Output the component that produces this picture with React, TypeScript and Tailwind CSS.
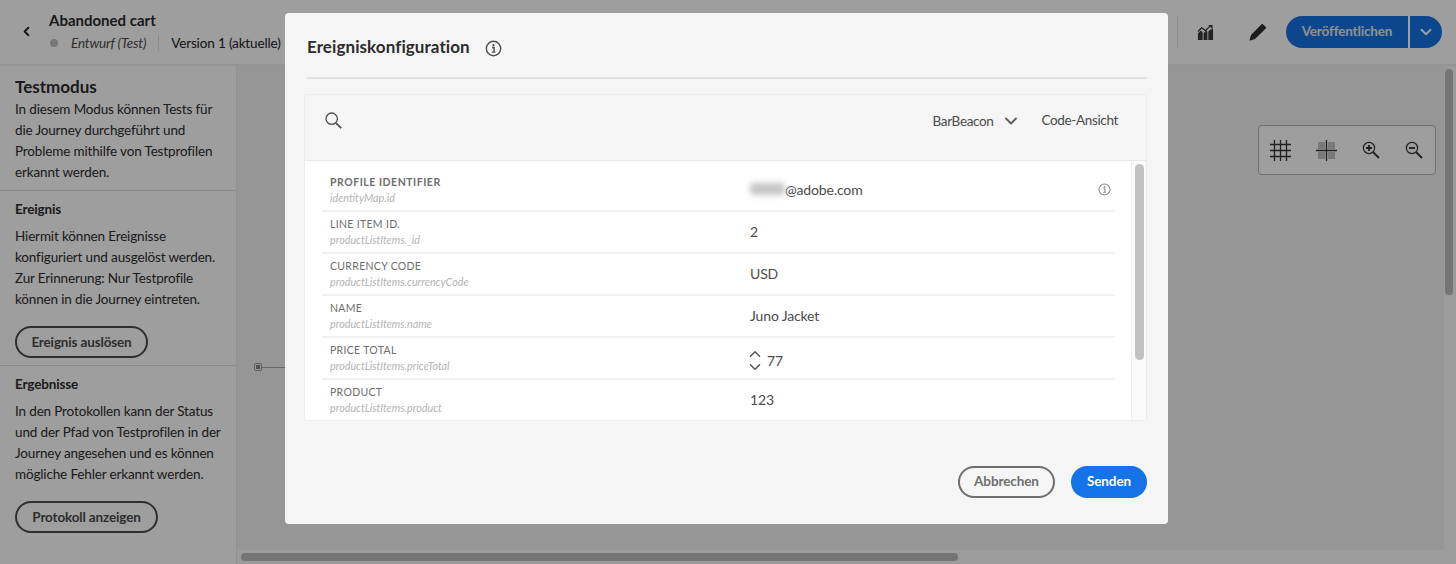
import { ChevronDown, ChevronLeft, ChevronUp } from "lucide-react";

const rows = [
  { label: "PROFILE IDENTIFIER", path: "identityMap.id", value: "@adobe.com", bold: true },
  { label: "LINE ITEM ID.", path: "productListItems._id", value: "2" },
  { label: "CURRENCY CODE", path: "productListItems.currencyCode", value: "USD" },
  { label: "NAME", path: "productListItems.name", value: "Juno Jacket" },
  { label: "PRICE TOTAL", path: "productListItems.priceTotal", value: "77", stepper: true },
  { label: "PRODUCT", path: "productListItems.product", value: "123" },
];

const InfoIcon = ({ className }: { className: string }) => (
  <svg className={className} viewBox="0 0 18 18" fill="none">
    <circle cx="9" cy="9" r="7.6" stroke="currentColor" strokeWidth="1.5" />
    <circle cx="9" cy="5.4" r="1.2" fill="currentColor" />
    <path d="M7.4 8h2.2v4.4M7.2 12.8h3.8" stroke="currentColor" strokeWidth="1.5" />
  </svg>
);

const SearchIcon = () => (
  <svg className="h-[17px] w-[17px] text-[#505050]" viewBox="0 0 17 17" fill="none" stroke="currentColor">
    <circle cx="6.7" cy="6.7" r="5.7" strokeWidth="1.3" />
    <path d="M10.8 10.8l5.4 5.4" strokeWidth="1.8" />
  </svg>
);

const ChartIcon = () => (
  <svg className="h-[17px] w-[17px] text-[#3a3a3a]" viewBox="0 0 18 18" fill="currentColor">
    <path d="M1 17v-7l3-3 2 2v8zM7 17V9.5l3-2.5 1 1.2V17zM12 17V8l2-2 3-1v12z" />
    <path d="M1 8l4-4 4 3 5-5" fill="none" stroke="currentColor" strokeWidth="1.4" />
    <path d="M12 1h4.5v4.5z" />
  </svg>
);

const PencilIcon = () => (
  <svg className="h-[18px] w-[18px] text-[#2f2f2f]" viewBox="0 0 18 18" fill="currentColor">
    <path d="M12.6 1.2a.9.9 0 0 1 1.3 0l2.9 2.9a.9.9 0 0 1 0 1.3L6 16l-4.8 1.4a.5.5 0 0 1-.6-.6L2 12z" />
  </svg>
);

const GridIcon = () => (
  <svg className="h-[21px] w-[21px] text-[#333]" viewBox="0 0 21 21" stroke="currentColor" strokeWidth="1.3">
    <path d="M4.5 0v21M10.5 0v21M16.5 0v21M0 4.5h21M0 10.5h21M0 16.5h21" />
  </svg>
);

const SnapIcon = () => (
  <svg className="h-[21px] w-[21px]" viewBox="0 0 21 21">
    <path d="M2 2h7v7H2zM12 2h7v7h-7zM2 12h7v7H2zM12 12h7v7h-7z" fill="#c4c4c4" />
    <path d="M10.5 0v21M0 10.5h21" stroke="#333" strokeWidth="1.3" />
  </svg>
);

const ZoomIcon = ({ plus }: { plus?: boolean }) => (
  <svg className="h-[18px] w-[18px] text-[#333]" viewBox="0 0 18 18" fill="none" stroke="currentColor">
    <circle cx="7" cy="7" r="5.6" strokeWidth="1.2" />
    <path d="M11 11l6 6" strokeWidth="1.8" />
    <path d={plus ? "M4 7h6M7 4v6" : "M4 7h6"} strokeWidth="1.8" />
  </svg>
);

const Divider = () => <div className="h-[1px] bg-[#e1e1e1]" />;

const Sidebar = () => (
  <aside className="w-[237px] shrink-0 bg-[#ffffff] text-[13.5px] leading-[21px] tracking-[-0.15px] text-[#2c2c2c] border-r border-[#eaeaea]">
    <div className="px-[15px] pt-[9px] h-[124px]">
      <h2 className="text-[17px] leading-[24px] font-bold tracking-normal">Testmodus</h2>
      <p>In diesem Modus können Tests für die Journey durchgeführt und Probleme mithilfe von Testprofilen erkannt werden.</p>
    </div>
    <Divider />
    <div className="px-[15px] pt-[8px] h-[174px]">
      <h3 className="font-bold leading-[20px]">Ereignis</h3>
      <p className="mt-[7px]">Hiermit können Ereignisse konfiguriert und ausgelöst werden. Zur Erinnerung: Nur Testprofile können in die Journey eintreten.</p>
      <button className="mt-[16px] h-[32px] w-[133px] rounded-full border-2 border-[#4b4b4b] font-bold text-[#4b4b4b]">Ereignis auslösen</button>
    </div>
    <Divider />
    <div className="px-[15px] pt-[8px]">
      <h3 className="font-bold leading-[20px]">Ergebnisse</h3>
      <p className="mt-[7px]">In den Protokollen kann der Status und der Pfad von Testprofilen in der Journey angesehen und es können mögliche Fehler erkannt werden.</p>
      <button className="mt-[16px] h-[32px] w-[143px] rounded-full border-2 border-[#4b4b4b] font-bold text-[#4b4b4b]">Protokoll anzeigen</button>
    </div>
  </aside>
);

const Dialog = () => (
  <div className="absolute left-[285px] top-[13px] flex h-[511px] w-[883px] flex-col rounded-[4px] bg-[#f5f5f5] pl-[19px] pr-[21px]">
    <div className="ml-[3px] flex h-[66px] shrink-0 items-center border-b-2 border-[#e1e1e1] pt-[3px]">
      <h1 className="text-[17px] font-bold tracking-[0.005em] text-[#2c2c2c]">Ereigniskonfiguration</h1>
      <InfoIcon className="ml-[15px] mt-[4px] h-[17px] w-[17px] text-[#505050]" />
    </div>
    <div className="mt-[15px] h-[327px] shrink-0 overflow-hidden rounded-[4px] border border-[#ececec]">
      <div className="flex h-[66px] items-center border-b border-[#e8e8e8] pb-[14px] pl-[20px] pr-[28px] text-[13.5px] tracking-[-0.35px] text-[#4b4b4b]">
        <SearchIcon />
        <span className="ml-auto mt-[1px]">BarBeacon</span>
        <ChevronDown className="ml-[7px] h-[20px] w-[20px] text-[#5c5c5c]" strokeWidth={2.2} />
        <span className="ml-[21px]">Code-Ansicht</span>
      </div>
      <div className="flex h-[260px] bg-white">
        <div className="flex-1 overflow-hidden pl-[17px] pr-[16px] pt-[9px]">
          {rows.map((row) => (
            <div key={row.label} className="flex h-[42px] shrink-0 items-center border-b-2 border-[#f0f0f0] pl-[8px]">
              <div className="w-[420px] shrink-0 pt-[1px]">
                <div className={`text-[10.5px] leading-[15px] text-[#6e6e6e] ${row.bold ? "font-bold tracking-[0.05em]" : "tracking-[0.03em]"}`}>{row.label}</div>
                <div className="text-[10.75px] italic leading-[16px] text-[#b3b3b3]">{row.path}</div>
              </div>
              <div className={`flex flex-1 items-center text-[14px] tracking-[-0.15px] text-[#4b4b4b] ${row.stepper ? "pt-[4px]" : "pb-[2px]"}`}>
                {row.bold && <span className="h-[12px] w-[35px] rounded-sm bg-[#c4c4c4] blur-[3px]" />}
                {row.stepper && (
                  <span className="-ml-[4px] mr-[3px] flex flex-col text-[#555]">
                    <ChevronUp className="h-[18px] w-[18px]" strokeWidth={2} />
                    <ChevronDown className="-mt-[5px] h-[18px] w-[18px]" strokeWidth={2} />
                  </span>
                )}
                <span>{row.value}</span>
                {row.bold && <InfoIcon className="ml-auto mr-[4px] h-[13px] w-[13px] text-[#8a8a8a]" />}
              </div>
            </div>
          ))}
        </div>
        <div className="w-[15px] shrink-0 border-l border-[#eeeeee] bg-[#fafafa] pl-[3px] pt-[3px]">
          <div className="h-[196px] w-[9px] rounded-full bg-[#c2c2c2]" />
        </div>
      </div>
    </div>
    <div className="mt-[45px] flex justify-end gap-[16px] text-[13.5px] font-bold tracking-[-0.1px]">
      <button className="h-[32px] w-[97px] rounded-full border-2 border-[#6e6e6e] pb-[2px] text-[#6e6e6e]">Abbrechen</button>
      <button className="h-[32px] w-[76px] rounded-full bg-[#1473e6] pb-[2px] text-white">Senden</button>
    </div>
  </div>
);

export default function App() {
  return (
    <div className="relative h-[564px] w-[1456px] overflow-hidden bg-white font-['Lato','Liberation_Sans',sans-serif]">
      <header className="flex h-[66px] items-center border-b-2 border-[#f0f0f0] bg-white pr-[14px]">
        <ChevronLeft className="mb-[2px] ml-[19px] h-[15px] w-[15px] text-[#222]" strokeWidth={3} />
        <div className="mb-[2px] ml-[15px]">
          <div className="text-[15px] font-bold leading-[20px] text-[#2c2c2c]">Abandoned cart</div>
          <div className="mt-[3px] flex items-center text-[13.5px] leading-[20px] tracking-[-0.15px] text-[#222]">
            <span className="ml-[1px] h-[8px] w-[8px] rounded-full bg-[#c0c0c0]" />
            <span className="ml-[13px] italic text-[#4b4b4b]">Entwurf (Test)</span>
            <span className="ml-[12px] h-[16px] w-[1px] bg-[#e1e1e1]" />
            <span className="ml-[12px]">Version 1 (aktuelle)</span>
          </div>
        </div>
        <div className="ml-auto flex items-center">
          <div className="h-[32px] w-[1px] bg-[#e1e1e1]" />
          <div className="ml-[19px] flex"><ChartIcon /></div>
          <div className="ml-[35px] flex"><PencilIcon /></div>
          <button className="ml-[19px] h-[32px] w-[122px] rounded-l-full bg-[#1473e6] pb-[2px] text-[13.5px] font-bold tracking-[-0.15px] text-[#e8e8e8]">Veröffentlichen</button>
          <button className="ml-[2px] flex h-[32px] w-[32px] items-center justify-center rounded-r-full bg-[#1473e6] text-white">
            <ChevronDown className="h-[18px] w-[18px]" strokeWidth={2.5} />
          </button>
        </div>
      </header>

      <div className="flex h-[498px]">
        <Sidebar />
        <div className="relative flex flex-1 flex-col bg-[#f2f2f2]">
          <div className="flex flex-1 justify-end">
            <div className="w-[12px] bg-[#fafafa] pl-[1px] pt-[3px]">
              <div className="h-[226px] w-[8px] rounded-full bg-[#bdbdbd]" />
            </div>
          </div>
          <div className="flex h-[14px] items-center bg-[#fafafa] pl-[4px]">
            <div className="h-[8px] w-[717px] rounded-full bg-[#bdbdbd]" />
          </div>
          {/* diagram node and floating toolbar on the canvas */}
          <div className="absolute left-[17px] top-[297px] flex items-center">
            <span className="h-[8px] w-[8px] rounded-[2px] border border-[#999] bg-[#888] bg-clip-content p-[1px]" />
            <span className="h-[1px] w-[40px] bg-[#aaa]" />
          </div>
          <div className="absolute left-[1021px] top-[59px] flex h-[50px] w-[178px] items-center justify-between rounded-[4px] border border-[#b4b4b4] bg-[#ffffff] pl-[11px] pr-[12px]">
            <GridIcon />
            <SnapIcon />
            <ZoomIcon plus />
            <ZoomIcon />
          </div>
        </div>
      </div>

      <div className="absolute inset-0 bg-black/[0.38]" />
      <Dialog />
    </div>
  );
}
